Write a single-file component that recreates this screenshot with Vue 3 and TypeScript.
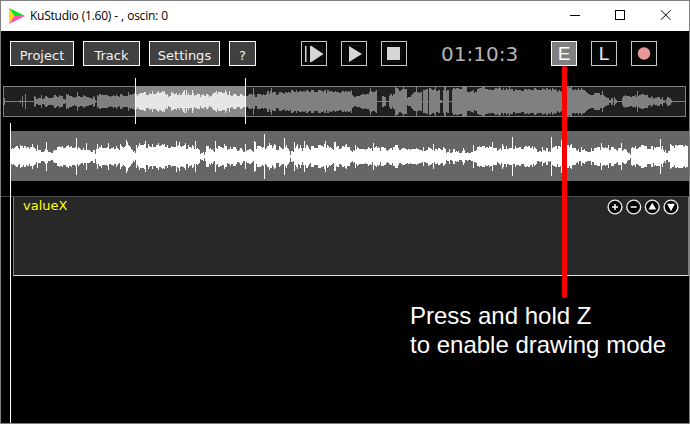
<script setup lang="ts">
type Point = [number, number]

const noise = (i: number): number => {
  const v = Math.sin(i * 12.9898) * 43758.5453
  return v - Math.floor(v)
}

// Envelope points are [x, half height]; peaks override the envelope at single columns.
function wave(points: Point[], peaks: Point[], mid: number, jitter: number, from: number, to: number): string {
  const spikes = new Map<number, number>(peaks)
  let d = ''
  let k = 0
  for (let x = from; x < to; x++) {
    while (k < points.length - 2 && points[k + 1][0] <= x) k++
    const [x0, h0] = points[k]
    const [x1, h1] = points[k + 1]
    const t = Math.min(1, Math.max(0, (x - x0) / (x1 - x0)))
    const base = h0 + (h1 - h0) * t
    const rough = base > 1 ? (noise(Math.floor(x / 1.5)) - 0.5) * jitter : 0
    const h = Math.round(spikes.get(x) ?? Math.max(0, base + rough))
    d += `M${x} ${mid - h}h1v${2 * h + 1}h-1z`
  }
  return d
}

const overviewPoints: Point[] = [
  [4, 0], [33, 0], [34, 4], [40, 3], [56, 4], [60, 5], [65, 1], [66, 6], [72, 5], [78, 4], [86, 5], [95, 3], [96, 0], [97, 7], [110, 6],
  [124, 6], [134, 7], [136, 6], [141, 7], [150, 8], [162, 9], [168, 6], [173, 8], [178, 6], [183, 8], [195, 6], [204, 6], [210, 5],
  [215, 8], [227, 8], [231, 5], [240, 6], [262, 6], [267, 8], [281, 8], [297, 10], [350, 9], [353, 5], [361, 5], [363, 7], [376, 9],
  [377, 0], [381, 0], [382, 3], [385, 3], [386, 0], [388, 0], [389, 6], [394, 7], [395, 12], [406, 12], [407, 4], [409, 4], [414, 9],
  [421, 9], [422, 0], [423, 12], [427, 12], [428, 0], [429, 13], [434, 12], [435, 9], [439, 10], [440, 1], [442, 0], [443, 12],
  [448, 12], [449, 0], [451, 0], [452, 12], [465, 13], [467, 9], [476, 10], [484, 13], [491, 10], [496, 12], [512, 11], [550, 12],
  [558, 9], [564, 10], [568, 13], [580, 12], [590, 7], [602, 7], [605, 4], [612, 2], [613, 0], [614, 4], [617, 0], [621, 0],
  [622, 4], [632, 5], [640, 6], [644, 5], [648, 5], [654, 3], [664, 3], [665, 0], [667, 3], [671, 1], [672, 0], [686, 0],
]
const overviewPeaks: Point[] = [
  [4, 3], [20, 1], [22, 5], [25, 7], [41, 6], [77, 9], [128, 9], [171, 9], [184, 11], [186, 11], [192, 11], [216, 10], [225, 11],
  [229, 10], [253, 13], [271, 13], [351, 11], [370, 13], [376, 11], [403, 14], [416, 14], [435, 14], [465, 14], [466, 14],
  [499, 14], [509, 14], [602, 10], [596, 8], [637, 10], [647, 6],
]

const trackPoints: Point[] = [
  [11, 9], [15, 7], [18, 9], [24, 8], [33, 8], [40, 6], [46, 5], [56, 4], [57, 9], [62, 8], [69, 10], [76, 10], [79, 7], [84, 6],
  [89, 7], [95, 4], [96, 9], [106, 9], [117, 9], [120, 8], [123, 10], [128, 12], [132, 6], [135, 2], [136, 10], [142, 10],
  [150, 10], [156, 11], [169, 10], [175, 9], [179, 12], [183, 8], [189, 10], [194, 8], [198, 6], [201, 3], [204, 3], [206, 9],
  [210, 8], [214, 3], [216, 10], [221, 7], [229, 9], [231, 7], [243, 6], [247, 7], [253, 4], [256, 9], [267, 8], [275, 9],
  [282, 7], [287, 9], [290, 3], [293, 3], [295, 9], [302, 7], [307, 9], [311, 7], [315, 9], [325, 10], [330, 8], [333, 7],
  [337, 10], [342, 8], [346, 10], [352, 5], [357, 8], [361, 6], [367, 8], [372, 5], [375, 9], [384, 6], [395, 9], [408, 7],
  [420, 7], [424, 6], [430, 8], [434, 6], [440, 6], [446, 5], [454, 5], [457, 4], [472, 3], [474, 7], [488, 9], [498, 5],
  [504, 8], [510, 6], [514, 8], [530, 9], [536, 6], [541, 5], [546, 7], [550, 4], [554, 8], [561, 8], [567, 9], [574, 10],
  [579, 5], [589, 5], [597, 8], [607, 8], [616, 7], [625, 5], [630, 2], [631, 9], [646, 9], [656, 8], [663, 8], [666, 2],
  [669, 3], [670, 10], [688, 10],
]
const trackPeaks: Point[] = [
  [32, 12], [37, 11], [46, 14], [76, 18], [86, 13], [97, 12], [101, 11], [108, 13], [120, 12], [126, 16], [127, 14], [139, 13],
  [145, 15], [148, 12], [176, 15], [185, 13], [195, 15], [215, 15], [224, 12], [245, 12], [254, 15], [255, 14], [264, 22],
  [269, 13], [271, 11], [274, 12], [284, 18], [286, 11], [294, 14], [297, 12], [300, 11], [304, 15], [306, 11], [311, 10],
  [325, 15], [334, 14], [335, 14], [355, 11], [368, 9], [373, 13], [375, 9], [383, 9], [423, 9], [428, 9], [433, 12], [443, 9],
  [453, 7], [463, 8], [473, 11], [492, 14], [502, 12], [512, 19], [532, 10], [542, 9], [551, 19], [561, 16], [581, 9],
  [591, 8], [601, 13], [608, 11], [621, 13], [660, 17], [685, 11],
]

const overview = wave(overviewPoints, overviewPeaks, 15, 3.4, 4, 686)
const track = wave(trackPoints, trackPeaks, 25, 4.6, 11, 688)

const menus = [
  { label: 'Project', cls: 'project' },
  { label: 'Track', cls: 'track-menu' },
  { label: 'Settings', cls: 'settings' },
  { label: '?', cls: 'help' },
]
</script>

<template>
  <div class="window">
    <header class="titlebar">
      <svg class="logo" width="16" height="16" viewBox="0 0 16 16">
        <path d="M0 0L16 8H5z" fill="#00e820" />
        <path d="M0 0L5.500 8L0 16z" fill="#ffd91a" />
        <path d="M0 16L5.500 8H16z" fill="#ff4fb0" />
      </svg>
      <span class="title">KuStudio (1.60) - , oscin: 0</span>
      <svg class="controls" width="101" height="10" viewBox="0 0 101 10" fill="none" stroke="#000">
        <path d="M0 5.500h10M45.500 .5h9v9h-9z" shape-rendering="crispEdges" />
        <path d="M91 .3l9.500 9.500M100.500 .3l-9.500 9.500" />
      </svg>
    </header>

    <nav class="toolbar">
      <div class="menus">
        <button v-for="m in menus" :key="m.label" class="menu" :class="m.cls">{{ m.label }}</button>
      </div>
      <div class="group">
        <button class="tool">
          <svg width="22" height="21" viewBox="0 0 22 21"><path d="M2.500 2.500h17v16h-17z" fill="none" stroke="#151515" /><path d="M2 3h1.500v16H2zM7 3h1.500L20.500 11L8.500 19H7z" fill="#d6d6d6" /></svg>
        </button>
        <button class="tool">
          <svg width="22" height="21" viewBox="0 0 22 21"><path d="M3 2.500h16v16H3z" fill="none" stroke="#151515" /><path d="M6 3l13 8L6 19z" fill="#d6d6d6" /></svg>
        </button>
        <button class="tool">
          <svg width="22" height="21" viewBox="0 0 22 21"><path d="M2 2.500h17v16H2z" fill="none" stroke="#151515" /><path d="M4 4h13v13H4z" fill="#d6d6d6" /></svg>
        </button>
      </div>
      <span class="clock">01:10:3</span>
      <div class="group modes">
        <button class="tool letter active">E</button>
        <button class="tool letter">L</button>
        <button class="tool">
          <svg width="22" height="21" viewBox="0 0 22 21"><circle cx="11" cy="10.500" r="6.200" fill="#e89898" /></svg>
        </button>
      </div>
    </nav>

    <section class="overview">
      <svg width="688" height="46" viewBox="1 -8 688 46" shape-rendering="crispEdges">
        <rect x="3.500" y=".5" width="682" height="30" fill="#202020" stroke="#808080" />
        <rect x="135" y="0" width="111" height="31" fill="#888" />
        <path :d="overview" fill="#808080" />
        <clipPath id="sel"><rect x="136" y="0" width="109" height="31" /></clipPath>
        <path :d="overview" fill="#e6e6e6" clip-path="url(#sel)" />
        <path d="M135.500 -8v46M245.500 -8v46" stroke="#fff" />
      </svg>
    </section>

    <section class="track">
      <svg width="688" height="50" viewBox="1 0 688 50" shape-rendering="crispEdges">
        <rect x="11" y="0" width="678" height="50" fill="#666" />
        <path :d="track" fill="#fff" />
      </svg>
    </section>

    <section class="lane">
      <div class="panel">
        <span class="name">valueX</span>
        <svg class="actions" width="74" height="18" viewBox="0 0 74 18">
          <g fill="#000" stroke="#eee" stroke-width="1.400">
            <circle cx="9" cy="9" r="6.900" /><circle cx="27.700" cy="9" r="6.900" />
            <circle cx="46.300" cy="9" r="6.900" /><circle cx="65" cy="9" r="6.900" />
          </g>
          <path d="M6 9h6M9 6v6M24.700 9h6" stroke="#fff" stroke-width="1.500" />
          <path d="M46.300 4.700l3.900 6.700h-7.800zM65 13.300l3.900-7.500h-7.800z" fill="#fff" />
        </svg>
      </div>
    </section>

    <p class="note">Press and hold Z<br />to enable drawing mode</p>
    <i class="playhead"></i>
    <i class="pointer"></i>
  </div>
</template>

<style>
body { margin: 0; }
</style>

<style scoped>
.window { position: relative; box-sizing: border-box; width: 690px; height: 424px; border: 1px solid #808080; background: #000; overflow: hidden; font-family: "DejaVu Sans", sans-serif; }
.titlebar { display: flex; align-items: center; height: 30px; padding: 0 13px 0 8px; box-sizing: border-box; background: #fff; color: #000; }
.logo { flex: none; margin-top: -1px; }
.title { margin-left: 5px; font: 12px/30px "Open Sans", "Noto Sans", sans-serif; letter-spacing: -.24px; word-spacing: .3px; white-space: pre; }
.controls { margin: 0 5px 2px auto; }
.toolbar { display: flex; align-items: flex-start; height: 47px; box-sizing: border-box; padding: 10px 0 0 9px; }
.menus { display: flex; gap: 9px; width: 291px; }
button { box-sizing: border-box; height: 25px; margin: 0; padding: 0; border-radius: 0; font-family: inherit; }
.menu { border: 1px solid #fff; background: #404040; color: #f2f2f2; font-size: 13px; line-height: 26px; padding-top: 1px; }
.project { width: 64px; }
.track-menu { width: 57px; }
.settings { width: 71px; }
.help { width: 27px; }
.group { display: flex; gap: 14px; }
.tool { display: flex; align-items: center; justify-content: center; width: 26px; border: 1px solid #c8c8c8; background: #050505; color: #eee; }
.tool svg { display: block; }
.letter { font-family: "Liberation Sans", sans-serif; font-size: 19px; line-height: 23px; }
.active { background: #808080; border-color: #fff; color: #fff; }
.clock { width: 110px; margin-left: 34px; font-size: 20px; line-height: 26px; color: #b4b4b4; }
.overview { height: 46px; }
.overview svg, .track svg { display: block; }
.track { margin-top: 7px; height: 65px; }
.lane { height: 80px; border-top: 1px solid #484848; box-sizing: border-box; }
.panel { display: flex; justify-content: space-between; align-items: flex-start; box-sizing: border-box; margin-left: 12px; height: 79px; border: solid #808080; border-width: 0 1px 1px; border-bottom-color: #ff0; background: #282828; }
.name { margin-left: 9px; font-size: 13px; line-height: 18px; color: #ff0; }
.actions { margin: 1px 8px 0 0; }
.note { margin: 25px 0 0 409px; font: 24px/29px "Liberation Sans", sans-serif; color: #fff; white-space: nowrap; }
.playhead { position: absolute; left: 9px; top: 122px; width: 1px; bottom: 0; background: #fff; }
.pointer { position: absolute; left: 561px; top: 65px; width: 5px; height: 232px; border-radius: 2px; background: #f00; }
</style>
